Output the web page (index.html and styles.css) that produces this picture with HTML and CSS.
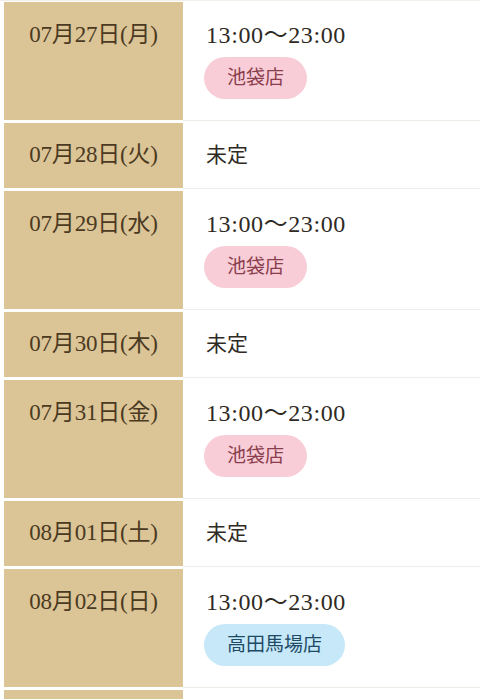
FILE: index.html
```html
<!DOCTYPE html>
<html lang="ja">
<head>
<meta charset="utf-8">
<link rel="stylesheet" href="styles.css">
</head>
<body>
<div class="schedule">
  <div class="row">
    <div class="date">07月27日(月)</div>
    <div class="info"><div class="time">13:00～23:00</div><span class="shop pink">池袋店</span></div>
  </div>
  <div class="row short">
    <div class="date">07月28日(火)</div>
    <div class="info"><div class="time tbd">未定</div></div>
  </div>
  <div class="row">
    <div class="date">07月29日(水)</div>
    <div class="info"><div class="time">13:00～23:00</div><span class="shop pink">池袋店</span></div>
  </div>
  <div class="row short">
    <div class="date">07月30日(木)</div>
    <div class="info"><div class="time tbd">未定</div></div>
  </div>
  <div class="row">
    <div class="date">07月31日(金)</div>
    <div class="info"><div class="time">13:00～23:00</div><span class="shop pink">池袋店</span></div>
  </div>
  <div class="row short">
    <div class="date">08月01日(土)</div>
    <div class="info"><div class="time tbd">未定</div></div>
  </div>
  <div class="row">
    <div class="date">08月02日(日)</div>
    <div class="info"><div class="time">13:00～23:00</div><span class="shop blue">高田馬場店</span></div>
  </div>
  <div class="row short">
    <div class="date"></div>
    <div class="info"></div>
  </div>
</div>
</body>
</html>
```
FILE: styles.css
```css
html, body {
  margin: 0;
  padding: 0;
  background: #ffffff;
}
body {
  font-family: "Liberation Serif", "Noto Sans CJK JP", serif;
  overflow: hidden;
}
.schedule {
  display: flex;
  flex-direction: column;
  gap: 3px;
  padding: 1px 0 0 4px;
  border-top: 1px solid #f2efea;
}
.row {
  display: grid;
  grid-template-columns: 179px 1fr;
}
.date {
  background: #dbc496;
  color: #4b3a22;
  font-size: 23px;
  line-height: 30px;
  text-align: center;
  padding-top: 18px;
  letter-spacing: -0.2px;
}
.short .date {
  padding-top: 17px;
}
.info {
  background: #ffffff;
  box-shadow: 0 1px 0 #efece7;
  padding: 18px 0 21px 23px;
  display: flex;
  flex-direction: column;
  align-items: flex-start;
  gap: 7px;
}
.short .info {
  padding: 17px 0 18px 23px;
  min-height: 30px;
}
.time {
  font-size: 24px;
  line-height: 30px;
  color: #2f2a24;
  letter-spacing: 0.6px;
}
.tbd {
  font-size: 21px;
  letter-spacing: 0;
}
.shop {
  display: inline-block;
  height: 42px;
  line-height: 42px;
  padding: 0 23px;
  margin-left: -2px;
  border-radius: 21px;
  font-size: 19px;
}
.pink {
  background: #f8cdd8;
  color: #8a3d4c;
}
.blue {
  background: #c6e8f8;
  color: #1d4a66;
}
```
